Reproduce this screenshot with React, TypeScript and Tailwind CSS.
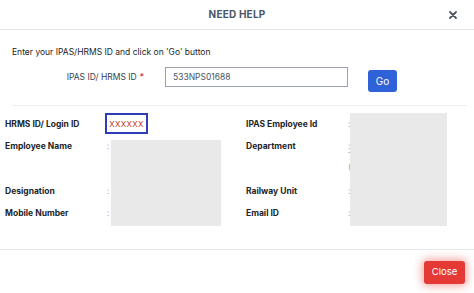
import React from "react";

const Row = ({ label, value, h = "h-[22px]" }: { label: string; value?: React.ReactNode; h?: string }) => (
  <div className={`flex ${h}`}>
    <div className="w-[102px] h-[22px] flex items-center font-bold text-[#212529]">{label}</div>
    <div className="flex-1">{value}</div>
  </div>
);

const Colon = () => <div className="h-[22px] flex items-center text-[#9ca3af]">:</div>;

export default function App() {
  return (
    <div className="w-[474px] h-[293px] bg-white font-['Inter',sans-serif] text-[8.5px] text-[#212529] overflow-hidden">
      {/* header */}
      <div className="relative h-[30px] flex items-center justify-center border-b border-[#e5e7eb]">
        <span className="text-[10px] font-bold text-[#4b5563] tracking-[0.2px]">NEED HELP</span>
        <button className="absolute right-[16px] top-[10px] text-[#4b5563]">
          <svg width="10" height="10" viewBox="0 0 10 10">
            <path d="M2 2 L8 8 M8 2 L2 8" stroke="currentColor" strokeWidth="1.8" strokeLinecap="round" />
          </svg>
        </button>
      </div>

      {/* search */}
      <div className="pl-[12px] pr-[7px]">
        <p className="mt-[16px] h-[12px] leading-[12px]">Enter your IPAS/HRMS ID and click on 'Go' button</p>
        <div className="flex items-start mt-[9px]">
          <label className="w-[132px] h-[20px] flex items-center justify-end text-[#374151]">
            IPAS ID/ HRMS ID <span className="text-[#dc2626] ml-[3px]">*</span>
          </label>
          <input
            readOnly
            value="533NPS01688"
            className="ml-[21px] w-[183px] h-[20px] border border-[#9ca3af] px-[7px] text-[8.5px] text-[#4b5563] outline-none"
          />
          <button className="ml-[20px] mt-[3px] w-[29px] h-[22px] rounded-[3px] bg-[#2f62d8] text-white text-[10px]">
            Go
          </button>
        </div>
        <div className="mt-[13px] border-b border-[#eeeeee]" />
      </div>

      {/* details */}
      <div className="relative mt-[7px] h-[135px] pl-[5px] flex">
        <div className="w-[241px]">
          <Row
            label="HRMS ID/ Login ID"
            value={
              <div className="-ml-[2px] w-[43px] h-[21px] border-2 border-[#2e3db5] flex items-center justify-center text-[8px] tracking-[0.3px] text-[#c0392b]">
                XXXXXX
              </div>
            }
          />
          <Row label="Employee Name" h="h-[45px]" value={<Colon />} />
          <Row label="Designation" value={<Colon />} />
          <Row label="Mobile Number" value={<Colon />} />
        </div>
        <div className="flex-1">
          <Row label="IPAS Employee Id" value={<Colon />} />
          <Row
            label="Department"
            h="h-[45px]"
            value={
              <div className="flex flex-col text-[#9ca3af]">
                <div className="h-[22px] flex items-center">:</div>
                <div className="h-[11px] leading-[11px] -mt-[6px]">T</div>
                <div className="h-[11px] leading-[11px]">(</div>
              </div>
            }
          />
          <Row label="Railway Unit" value={<Colon />} />
          <Row label="Email ID" value={<Colon />} />
        </div>
        {/* redaction boxes */}
        <div className="absolute left-[111px] top-[27px] w-[110px] h-[86px] bg-[#e9e9e9]" />
        <div className="absolute left-[350px] top-0 w-[97px] h-[113px] bg-[#e9e9e9]" />
      </div>

      {/* footer */}
      <div className="mt-[1px] border-t border-[#e5e7eb] flex justify-end pr-[9px] pt-[11px]">
        <button className="w-[41px] h-[23px] rounded-[3px] bg-[#e53935] text-white text-[9.5px] shadow-[0_0_8px_2px_rgba(229,57,53,0.45)]">
          Close
        </button>
      </div>
    </div>
  );
}
